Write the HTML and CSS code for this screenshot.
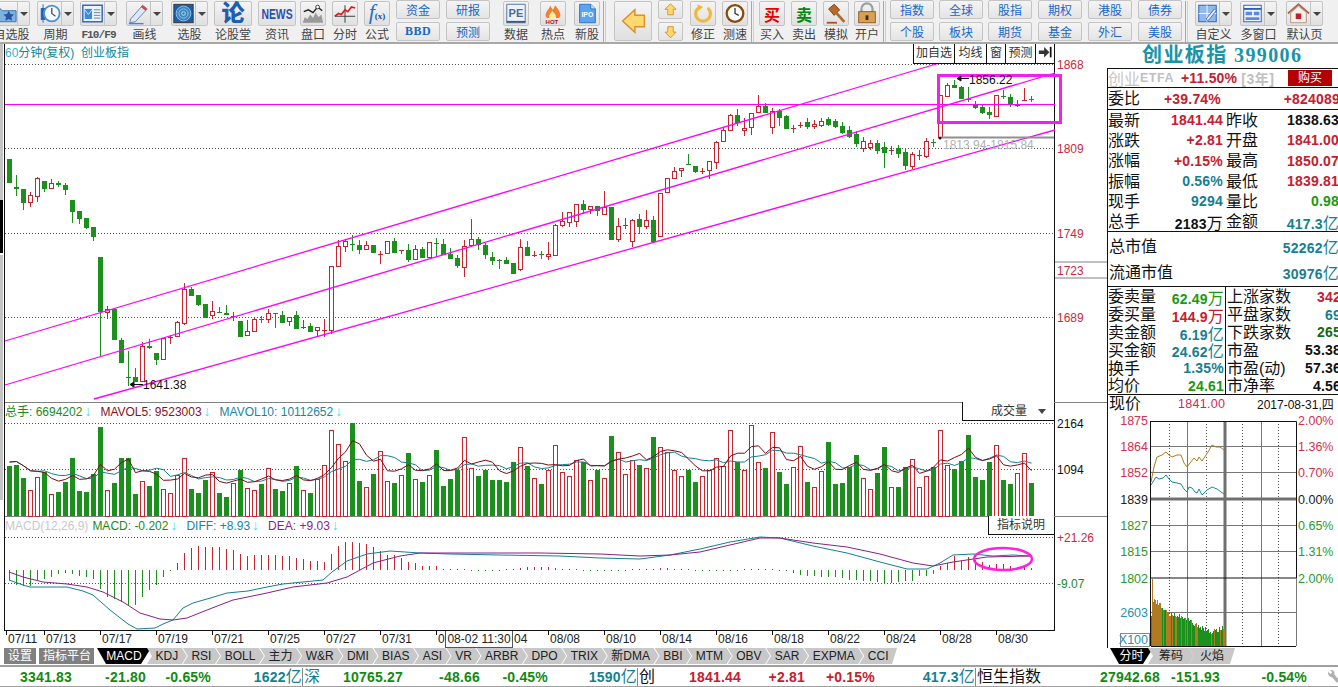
FILE: index.html
```html
<!DOCTYPE html>
<html lang="zh-CN">
<head>
<meta charset="utf-8">
<title>创业板指 399006</title>
<link rel="stylesheet" href="styles.css">
</head>
<body>
<header class="toolbar">
  <div class="tool split first"><div class="btn"><span class="ic"><svg viewBox="0 0 25 24"><path d="M-6 6h12l3 3h15v12H-6z" fill="#7fb2e0" stroke="#3a6ea8"/><path d="M16 9l1.800 3.600 4 .5-2.900 2.800.7 4-3.600-1.900-3.600 1.900.7-4-2.900-2.800 4-.5z" fill="#2a55a0"/></svg></span><span class="dd"></span></div><span class="lab">自选股</span></div>
  <div class="tool split ml7"><div class="btn"><span class="ic"><svg viewBox="0 0 25 24"><rect x="3" y="6" width="5" height="13" fill="#2a60c0"/><path d="M5.500 2v20" stroke="#2a60c0"/><circle cx="15" cy="12" r="8.500" fill="#f4f8ff" stroke="#4a90d8" stroke-width="2"/><path d="M15 6v6l4 3" fill="none" stroke="#555" stroke-width="1.500"/></svg></span><span class="dd"></span></div><span class="lab">周期</span></div>
  <div class="tool split ml6"><div class="btn"><span class="ic"><svg viewBox="0 0 25 24"><rect x="2" y="3" width="21" height="18" fill="#eef4ff" stroke="#2a5db0" stroke-width="1.500"/><rect x="4" y="7" width="8" height="11" fill="#3a8ae0"/><path d="M4 8l4 5 4-5" fill="none" stroke="#cfe6ff"/><path d="M14 8h7M14 11h7M14 14h7M14 17h7" stroke="#6a7a90"/></svg></span><span class="dd"></span></div><span class="lab mono">F10/F9</span></div>
  <div class="tool split ml9"><div class="btn"><span class="ic"><svg viewBox="0 0 25 24"><path d="M4 18L17 3l5 4L9 21l-6 1z" fill="#dfe8f4" stroke="#5a80b0"/><path d="M17 3l5 4-2 2-5-4z" fill="#d84a3a"/><path d="M2 23h16" stroke="#3a8ae0" stroke-width="1.500"/></svg></span><span class="dd"></span></div><span class="lab">画线</span></div>
  <div class="tool split ml8"><div class="btn"><span class="ic"><svg viewBox="0 0 25 24"><rect x="2" y="2" width="21" height="20" fill="#1f5ca8" stroke="#333"/><circle cx="12.500" cy="12" r="8" fill="#3d86c0" stroke="#8fc4e8"/><circle cx="12.500" cy="12" r="5" fill="none" stroke="#8fc4e8"/><circle cx="12.500" cy="12" r="2" fill="none" stroke="#bde0f4"/></svg></span><span class="dd"></span></div><span class="lab">选股</span></div>
  <div class="tool wide ml6"><div class="btn center"><span class="logo-lun">论</span></div><span class="lab">论股堂</span></div>
  <div class="tool wide ml6"><div class="btn center"><span class="logo-news">NEWS</span></div><span class="lab">资讯</span></div>
  <div class="tool ml4"><div class="btn"><svg viewBox="0 0 26 24"><path d="M2 22l2-6 3 2 3-5 3 4 3-6 3 5 3-3 2 9z" fill="#9a9a9a"/><path d="M3 10l5-2 5 3 5-6 5 4" fill="none" stroke="#222" stroke-width="1.500"/><circle cx="18" cy="5" r="2" fill="#fff" stroke="#333"/></svg></div><span class="lab">盘口</span></div>
  <div class="tool ml6"><div class="btn"><svg viewBox="0 0 26 24"><path d="M13 3v19M2 15h22" stroke="#333"/><path d="M2 15l4-3 3 1 4-5 3 2 4-5 4 1" fill="none" stroke="#e01818" stroke-width="1.800"/></svg></div><span class="lab">分时</span></div>
  <div class="tool ml6"><div class="btn center"><span class="logo-fx">f<small>(x)</small></span></div><span class="lab">公式</span></div>
  <div class="pair ml6"><span class="pb">资金</span><span class="pb bbd">BBD</span></div>
  <div class="pair ml6"><span class="pb">研报</span><span class="pb">预测</span></div>
  <div class="tool ml13"><div class="btn"><svg viewBox="0 0 26 24"><path d="M3 2h20v20H3z" fill="#eef3fa" stroke="#4a6fa0"/><path d="M3 20h20v2H3z" fill="#3a5a8a"/><text x="5" y="16" class="ti-pe">PE</text></svg></div><span class="lab">数据</span></div>
  <div class="tool ml11"><div class="btn"><svg viewBox="0 0 26 24"><path d="M5 14c0-5 4-6 5-11 1 3 2 3 3 5 1-2 2-3 2-5 3 3 6 7 6 11 0 2-1 3-2 3H7c-1 0-2-1-2-3z" fill="#f08030"/><path d="M9 17c-1-4 2-5 3-8 2 3 5 4 4 8z" fill="#fff0a0"/><text x="5" y="23" class="ti-hot">HOT</text></svg></div><span class="lab">热点</span></div>
  <div class="tool ml8"><div class="btn"><svg viewBox="0 0 26 24"><path d="M5 2h12l5 5v15H5z" fill="#5aa4f0" stroke="#2a70c0"/><path d="M17 2v5h5" fill="#cfe4fa" stroke="#2a70c0"/><text x="7" y="16" class="ti-ipo">IPO</text></svg></div><span class="lab">新股</span></div>
  <span class="sep"></span>
  <div class="btn bigbtn"><svg viewBox="0 0 38 40"><path d="M8 20l13-12v6h10v12H21v6z" fill="#ffd870" stroke="#d8902a" stroke-width="1.500"/></svg></div>
  <div class="pair narrow ml6"><span class="pb"><svg viewBox="0 0 25 18"><path d="M12.500 3l6 6h-3v6h-6V9h-3z" fill="#ffd870" stroke="#d8902a"/></svg></span><span class="pb"><svg viewBox="0 0 25 18"><path d="M12.500 16l-6-6h3V4h6v6h3z" fill="#ffd870" stroke="#d8902a"/></svg></span></div>
  <div class="tool ml7"><div class="btn"><svg viewBox="0 0 26 24"><path d="M8 6a8 8 0 1 0 10 0" fill="none" stroke="#f0b840" stroke-width="3.500"/><path d="M7 2l6 3-5 4z" fill="#f0b840"/></svg></div><span class="lab">修正</span></div>
  <div class="tool ml6"><div class="btn"><svg viewBox="0 0 26 24"><circle cx="13" cy="12" r="9" fill="#fff" stroke="#8a4a10" stroke-width="2.500"/><path d="M13 6v6l4 2" fill="none" stroke="#222" stroke-width="1.300"/></svg></div><span class="lab">测速</span></div>
  <span class="sep"></span>
  <div class="tool ml2"><div class="btn center"><span class="logo-buy">买</span></div><span class="lab">买入</span></div>
  <div class="tool ml6"><div class="btn center"><span class="logo-sell">卖</span></div><span class="lab">卖出</span></div>
  <div class="tool ml6"><div class="btn"><svg viewBox="0 0 26 24"><path d="M5 7l6-5 6 6-6 6z" fill="#b86a2a" stroke="#7a4010"/><path d="M13 11l9 10" stroke="#b06a30" stroke-width="3"/><path d="M3 22h11" stroke="#c04a20" stroke-width="2"/></svg></div><span class="lab">模拟</span></div>
  <div class="tool ml5"><div class="btn"><svg viewBox="0 0 26 24"><path d="M7 11V7a6 6 0 0 1 12 0v4" fill="none" stroke="#9aa0a0" stroke-width="2.500"/><rect x="4" y="10" width="18" height="12" fill="#d8a050" stroke="#8a5a20"/><rect x="11.500" y="14" width="3" height="5" fill="#3a2a10"/></svg></div><span class="lab">开户</span></div>
  <span class="sep"></span>
  <div class="pair ml1"><span class="pb">指数</span><span class="pb">个股</span></div>
  <div class="pair ml5"><span class="pb">全球</span><span class="pb">板块</span></div>
  <div class="pair ml5"><span class="pb">股指</span><span class="pb">期货</span></div>
  <div class="pair ml6"><span class="pb">期权</span><span class="pb">基金</span></div>
  <div class="pair ml6"><span class="pb">港股</span><span class="pb">外汇</span></div>
  <div class="pair ml6"><span class="pb">债券</span><span class="pb">美股</span></div>
  <span class="sep"></span>
  <div class="tool split ml4"><div class="btn"><span class="ic"><svg viewBox="0 0 25 24"><rect x="3" y="3" width="19" height="18" fill="#8fb8f0" stroke="#2a5db0"/><path d="M3 12h19M12 3v18" stroke="#fff"/><path d="M11 18L20 7l2 2-9 11z" fill="#e8eef8" stroke="#4a6fa0"/></svg></span><span class="dd"></span></div><span class="lab">自定义</span></div>
  <div class="tool split ml8"><div class="btn"><span class="ic"><svg viewBox="0 0 25 24"><rect x="3" y="3" width="19" height="18" fill="#eef4ff" stroke="#2a5db0"/><path d="M3 7h19" stroke="#2a5db0" stroke-width="2"/><path d="M5 10h7v4H5zM14 10h6v4h-6zM5 16h15v3H5z" fill="#5a8ad8"/></svg></span><span class="dd"></span></div><span class="lab">多窗口</span></div>
  <div class="tool split ml9"><div class="btn"><span class="ic"><svg viewBox="0 0 25 24"><path d="M1 12L12.500 2 24 12" fill="none" stroke="#a86a50" stroke-width="2"/><path d="M4 11v11h17V11l-8.500-7z" fill="#f4f0e8" stroke="#b09080"/><rect x="9.500" y="12" width="6" height="6" fill="#c02030"/></svg></span><span class="dd"></span></div><span class="lab">默认页</span></div>
</header>

<div class="main">
  <section class="chart">
    <div class="panes">
      <div class="pane pane-main">
        <div class="pane-head">
          <div class="title"><span class="t60">60</span>分钟(复权)&nbsp; 创业板指</div>
          <div class="toggles"><span class="tg">加自选</span><span class="tg">均线</span><span class="tg">窗</span><span class="tg">预测</span><span class="tg tg-arrow"><svg viewBox="0 0 16 14"><path d="M1 5h6V1l6 6-6 6V9H1z" fill="#333"/><path d="M14.500 1v12" stroke="#111" stroke-width="2"/></svg></span></div>
        </div>
      </div>
      <div class="pane pane-vol">
        <div class="pane-head">
          <div class="legend"><span class="lg c-g">总手: 6694202<b class="dn">↓</b></span><span class="lg c-dr">MAVOL5: 9523003<b class="dn">↓</b></span><span class="lg c-t">MAVOL10: 10112652<b class="dn">↓</b></span></div>
          <div class="selbox">成交量<i class="caret"></i></div>
        </div>
      </div>
      <div class="pane pane-macd">
        <div class="pane-head">
          <div class="legend"><span class="lg c-lg tight">MACD(12,26,9)</span><span class="lg c-g">MACD: -0.202<b class="dn">↓</b></span><span class="lg c-t">DIFF: +8.93<b class="dn">↓</b></span><span class="lg c-p">DEA: +9.03<b class="dn">↓</b></span></div>
          <div class="selbox help">指标说明</div>
        </div>
      </div>
    </div>
    <div class="timeaxis">
      <span class="tk tk-first">07/11</span><span class="tk">07/13</span><span class="tk">07/17</span><span class="tk">07/19</span><span class="tk">07/21</span><span class="tk">07/25</span><span class="tk">07/27</span><span class="tk">07/31</span><span class="tk">0</span><span class="tk tk-part">04</span><span class="tk">08/08</span><span class="tk">08/10</span><span class="tk">08/14</span><span class="tk">08/16</span><span class="tk">08/18</span><span class="tk">08/22</span><span class="tk">08/24</span><span class="tk">08/28</span><span class="tk">08/30</span>
      <span class="crosstime">08-02 11:30</span>
    </div>
    <nav class="tabs">
      <span class="setbtn">设置</span><span class="setbtn">指标平台</span>
      <span class="tab active">MACD</span><span class="tab">KDJ</span><span class="tab">RSI</span><span class="tab">BOLL</span><span class="tab">主力</span><span class="tab">W&amp;R</span><span class="tab">DMI</span><span class="tab">BIAS</span><span class="tab">ASI</span><span class="tab">VR</span><span class="tab">ARBR</span><span class="tab">DPO</span><span class="tab">TRIX</span><span class="tab">新DMA</span><span class="tab">BBI</span><span class="tab">MTM</span><span class="tab">OBV</span><span class="tab">SAR</span><span class="tab">EXPMA</span><span class="tab last">CCI</span>
    </nav>

    <svg class="canvas" viewBox="0 44 1107 604" width="1107" height="604">
      <g class="grid">
        <path d="M5 64.500H1054M5 148.500H1054M5 233.500H1054M5 317.500H1054M5 423.500H1054M5 469.500H1054M5 537.500H1054M5 583.500H1054"/>
      </g>
      <path class="divider" d="M5 402.500H1107M5 516.500H1107M1055 262H1107M1055 278H1107" />
      <g id="candles"></g>
      <g id="vols"></g>
      <g id="macds"></g>
      <polyline id="ma10" class="ln-teal" points=""/>
      <polyline id="ma5" class="ln-dred" points=""/>
      <polyline class="ln-teal" points="9,580 23,585 30,587 50,587 67,587 83,591 93,595 110,610 128,624 137,629 155,628 163,624 173,620 183,608 193,603 207,599 227,593 248,591 267,587 283,584 323,580 332,572 347,561 367,554 390,551 420,553 450,554 500,555 560,556 600,558 640,559 670,555 700,549 730,542 760,537 780,538 813,546 847,553 880,562 907,569 927,569 940,563 953,555 973,554 993,556 1013,555 1030,556"/>
      <polyline class="ln-purple" points="9,572 23,577 43,582 67,584 87,587 103,592 123,602 140,613 160,619 173,620 187,618 207,610 233,600 267,593 293,587 327,583 347,577 373,563 400,556 420,553 450,553 500,553 540,553 600,554 640,556 670,555 700,552 730,545 760,538 780,538 813,543 847,547 880,554 913,563 933,566 953,562 987,557 1030,556"/>
      <g class="magenta">
        <path class="mag-h" d="M5 104.500H1055"/>
        <path d="M5 341L943 62M5 385L1055 73M94 399L1055 130"/>
      </g>
      <rect class="mag-box" x="938.500" y="75.500" width="122" height="47"/>
      <ellipse class="mag-oval" cx="1003" cy="559" rx="29" ry="11"/>
      <path class="hl" d="M941 137.500H1054"/>
      <text x="943" y="149" class="lbl-gray">1813.94-1815.84</text>
      <path class="arrowline" d="M969 78.500H958M961 76l-4 2.500 4 2.500z"/>
      <text x="969" y="84" class="lbl-k">1856.22</text>
      <path class="arrowline" d="M143 384.500H131M134 382l-4 2.500 4 2.500z"/>
      <text x="143" y="389" class="lbl-k">1641.38</text>
      <circle cx="940" cy="138" r="1.500" fill="#111"/>
      <text x="1057" y="69" class="lbl-r">1868</text>
      <text x="1057" y="153" class="lbl-r">1809</text>
      <text x="1057" y="238" class="lbl-r">1749</text>
      <text x="1057" y="275" class="lbl-r">1723</text>
      <text x="1057" y="322" class="lbl-r">1689</text>
      <text x="1057" y="428" class="lbl-k">2164</text>
      <text x="1057" y="474" class="lbl-k">1094</text>
      <text x="1057" y="542" class="lbl-r">+21.26</text>
      <text x="1057" y="588" class="lbl-g">-9.07</text>
    </svg>
  </section>

  <aside class="side">
    <div class="panel">
      <div class="q-title">创业板指 399006</div>
      <div class="q-etf"><span class="gy16">创业</span><b class="gyb">ETFA</b><b class="red plus">+11.50%</b><span class="gyb thin">[3年]</span><span class="buy">购买</span></div>
      <div class="q-wei"><span class="cn">委比</span><b class="red w1">+39.74%</b><b class="red w2">+824089</b></div>
      <div class="q-grid">
        <div class="q-cell"><span class="cn">最新</span><b class="red">1841.44</b></div><div class="q-cell"><span class="cn">昨收</span><b class="blk">1838.63</b></div>
        <div class="q-cell"><span class="cn">涨跌</span><b class="red">+2.81</b></div><div class="q-cell"><span class="cn">开盘</span><b class="red">1841.00</b></div>
        <div class="q-cell"><span class="cn">涨幅</span><b class="red">+0.15%</b></div><div class="q-cell"><span class="cn">最高</span><b class="red">1850.07</b></div>
        <div class="q-cell"><span class="cn">振幅</span><b class="teal">0.56%</b></div><div class="q-cell"><span class="cn">最低</span><b class="red">1839.81</b></div>
        <div class="q-cell"><span class="cn">现手</span><b class="teal">9294</b></div><div class="q-cell"><span class="cn">量比</span><b class="green">0.98</b></div>
        <div class="q-cell"><span class="cn">总手</span><b class="blk">2183<em>万</em></b></div><div class="q-cell"><span class="cn">金额</span><b class="teal">417.3<em>亿</em></b></div>
      </div>
      <div class="q-cap">
        <div class="q-cap-row"><span class="cn">总市值</span><b class="teal">52262<em>亿</em></b></div>
        <div class="q-cap-row"><span class="cn">流通市值</span><b class="teal">30976<em>亿</em></b></div>
      </div>
      <div class="q-stat">
        <div class="q-cell"><span class="cn">委卖量</span><b class="green">62.49<em>万</em></b></div><div class="q-cell"><span class="cn">上涨家数</span><b class="red">342</b></div>
        <div class="q-cell"><span class="cn">委买量</span><b class="red">144.9<em>万</em></b></div><div class="q-cell"><span class="cn">平盘家数</span><b class="teal">69</b></div>
        <div class="q-cell"><span class="cn">卖金额</span><b class="teal">6.19<em>亿</em></b></div><div class="q-cell"><span class="cn">下跌家数</span><b class="dgreen">265</b></div>
        <div class="q-cell"><span class="cn">买金额</span><b class="teal">24.62<em>亿</em></b></div><div class="q-cell"><span class="cn">市盈</span><b class="blk">53.38</b></div>
        <div class="q-cell"><span class="cn">换手</span><b class="teal">1.35%</b></div><div class="q-cell"><span class="cn">市盈(动)</span><b class="blk">57.36</b></div>
        <div class="q-cell"><span class="cn">均价</span><b class="green">24.61</b></div><div class="q-cell"><span class="cn">市净率</span><b class="blk">4.56</b></div>
      </div>
      <div class="q-now"><span class="cn">现价</span><span class="nowp">1841.00</span><span class="nowd">2017-08-31,四</span></div>
      <svg class="mini" viewBox="1108 412 230 236" width="230" height="236">
        <g class="mini-dots"><path d="M1170.500 421V646M1207.500 421V646M1243.500 421V646M1279.500 421V646"/></g>
        <g class="mini-grid"><path d="M1152 446.500H1297M1152 472.500H1297M1152 525.500H1297M1152 551.500H1297M1152 612.500H1297M1188.500 421V646M1262.500 421V646M1297.500 578V646"/></g>
        <path class="mini-thick" d="M1152 499H1297M1226 421V646"/>
        <g id="minivol"></g>
        <polyline class="mini-brown" points="1152,482 1155,467 1158,457 1163,455 1167,452 1170,455 1173,457 1178,455 1182,455 1185,463 1188,467 1191,463 1195,458 1198,461 1200,457 1203,461 1205,458 1209,452 1213,445 1217,447 1221,447 1225,450"/>
        <polyline class="mini-teal" points="1152,485 1157,477 1160,479 1164,478 1167,475 1170,479 1173,482 1178,483 1182,484 1185,489 1188,492 1190,487 1193,488 1196,492 1198,493 1200,489 1203,495 1208,490 1213,487 1218,489 1222,492 1225,494"/>
        <path class="mini-black" d="M1152 421.500H1297.500V578M1152 578H1297M1151.500 421V646M1152 646.500H1297"/>
        <rect class="x100" x="1121.500" y="633.500" width="29" height="13"/>
        <text x="1149" y="425" class="m-r m-e">1875</text>
        <text x="1149" y="451" class="m-r m-e">1864</text>
        <text x="1149" y="477" class="m-r m-e">1852</text>
        <text x="1149" y="504" class="m-k m-e">1839</text>
        <text x="1149" y="530" class="m-g m-e">1827</text>
        <text x="1149" y="556" class="m-g m-e">1815</text>
        <text x="1149" y="583" class="m-g m-e">1802</text>
        <text x="1149" y="617" class="m-t m-e">2603</text>
        <text x="1149" y="644" class="m-t m-e">X100</text>
        <text x="1299" y="425" class="m-r">2.00%</text>
        <text x="1299" y="451" class="m-r">1.36%</text>
        <text x="1299" y="477" class="m-r">0.70%</text>
        <text x="1299" y="504" class="m-k">0.00%</text>
        <text x="1299" y="530" class="m-g">0.65%</text>
        <text x="1299" y="556" class="m-g">1.31%</text>
        <text x="1299" y="583" class="m-g">2.00%</text>
      </svg>
    </div>
    <nav class="side-tabs"><span class="tab active">分时</span><span class="tab">筹码</span><span class="tab last">火焰</span></nav>
  </aside>
</div>

<footer class="status">
  <span class="num g">3341.83</span><span class="num g">-21.80</span><span class="num g">-0.65%</span><span class="num t">1622<em>亿</em></span>
  <span class="nm">深</span><span class="num g">10765.27</span><span class="num g">-48.66</span><span class="num g">-0.45%</span><span class="num t">1590<em>亿</em></span>
  <span class="nm dk">创</span><span class="num r">1841.44</span><span class="num r">+2.81</span><span class="num r">+0.15%</span><span class="num t">417.3<em>亿</em></span>
  <span class="nm dk">恒生指数</span><span class="num g">27942.68</span><span class="num g">-151.93</span><span class="num g">-0.54%</span>
  <span class="wrench"><svg viewBox="0 0 12 14" width="12" height="14"><path d="M1 2l3 2 1-2-2-2c2-.5 4 .5 4.500 2.500 0 .8 0 1.300-.2 1.800L12 10l-2 3-5-5.800C3 7.500 .5 5 1 2z" fill="#b0b0b0"/></svg></span>
</footer>
<script src="chart.js"></script>
</body>
</html>
```
FILE: styles.css
```css
* { box-sizing: border-box; }
html, body { margin: 0; padding: 0; }
body {
  width: 1338px; height: 687px; overflow: hidden; background: #fff;
  font-family: "Liberation Sans", "Noto Sans CJK SC", sans-serif;
  font-size: 12px; color: #111;
}
em { font-style: normal; font-weight: 400; font-size: 16px; }
svg { display: block; }

/* toolbar */
.toolbar {
  display: flex; height: 44px; background: #f0f0f0;
  border-bottom: 2px solid #a8a8a8; overflow: hidden; padding-top: 1px;
}
.tool { display: flex; flex-direction: column; align-items: center; width: 26px; flex: none; }
.tool.split { width: 37px; }
.tool.wide { width: 38px; }
.tool.first { margin-left: -7px; }
.btn {
  width: 100%; height: 25px; display: flex; flex: none;
  border: 1px solid #c4c4c4; border-radius: 2px;
  background: linear-gradient(#f4f4f4, #e0e0e0);
}
.btn.center { align-items: center; justify-content: center; }
.btn svg { width: 100%; height: 100%; }
.ic { width: 24px; flex: none; border-right: 1px solid #c4c4c4; }
.dd { flex: 1; position: relative; }
.dd::after {
  content: ""; position: absolute; left: 2px; top: 10px;
  border: 4px solid transparent; border-top: 4px solid #444; border-bottom: 0;
}
.lab { margin-top: 2px; line-height: 15px; color: #444; white-space: nowrap; font-size: 12px; }
.lab.mono { font-family: "Liberation Mono", monospace; font-size: 11px; letter-spacing: -.9px; font-weight: 700; color: #555; }
.logo-lun { font-size: 23px; line-height: 23px; font-weight: 900; color: #1a5fb4; }
.logo-news { font-size: 14px; font-weight: 700; color: #2a50b0; transform: scaleX(.74); display: inline-block; }
.logo-fx { font-family: "Liberation Serif", serif; font-style: italic; font-size: 22px; line-height: 22px; color: #2070c8; }
.logo-fx small { font-size: 9px; color: #2050a0; font-style: normal; font-weight: 700; }
.logo-buy { font-size: 16px; font-weight: 700; color: #e80000; }
.logo-sell { font-size: 16px; font-weight: 700; color: #008a10; }
.ti-pe { font: 700 12px "Liberation Sans", sans-serif; fill: #4a6a9a; }
.ti-hot { font: 700 6.500px "Liberation Sans", sans-serif; fill: #b01010; }
.ti-ipo { font: 700 7.500px "Liberation Sans", sans-serif; fill: #fff; }
.pair { display: flex; flex-direction: column; width: 44px; flex: none; gap: 3px; margin-top: -1px; }
.pair.narrow { width: 25px; }
.pb {
  height: 19px; display: flex; align-items: center; justify-content: center;
  border: 1px solid #c4c4c4; border-radius: 2px; background: linear-gradient(#f4f4f4, #e4e4e4);
  color: #1668c8; font-size: 12px;
}
.pb.bbd { font-family: "Liberation Serif", serif; font-weight: 700; letter-spacing: .5px; }
.bigbtn { width: 38px; height: 40px; flex: none; margin-left: 5px; }
.sep {
  width: 3px; height: 42px; margin: 0 3px 0 3px; flex: none;
  border-left: 1px solid #a8a8a8; border-right: 1px solid #d0d0d0; background: #f0f0f0;
}
.ml1 { margin-left: 1px; } .ml2 { margin-left: 2px; }
.ml4 { margin-left: 4px; } .ml5 { margin-left: 5px; } .ml6 { margin-left: 6px; } .ml7 { margin-left: 7px; }
.ml8 { margin-left: 8px; } .ml9 { margin-left: 9px; } .ml11 { margin-left: 11px; } .ml13 { margin-left: 13px; }

/* main */
.main { display: flex; height: 620px; }
.chart { width: 1107px; flex: none; position: relative; }
.canvas { position: absolute; left: 0; top: 0; pointer-events: none; }
.canvas text { font-family: "Liberation Sans", sans-serif; font-size: 12px; }
.chart::before {
  content: ""; position: absolute; left: 0; top: 0; width: 3px; height: 456px;
  background: linear-gradient(#c4c4c4 0 156px, #000 156px 209px, #fff 209px 211px, #c4c4c4 211px);
}
.panes { margin-left: 4px; width: 1051px; height: 587px; border: solid #111; border-width: 0 1px 1px 1px; }
.pane { position: relative; }
.pane-main { height: 358px; }
.pane-vol { height: 114px; }
.pane-macd { height: 114px; }
.pane-head { position: relative; z-index: 1; display: flex; justify-content: space-between; align-items: flex-start; }
.title { color: #10889a; font-size: 12px; line-height: 19px; white-space: nowrap; }
.t60 { color: #3ab0c8; }
.toggles { display: flex; height: 20px; background: #fff; border-bottom: 1px solid #111; }
.tg { border-left: 1px solid #111; height: 19px; line-height: 19px; padding: 0 2px; font-size: 12px; color: #333; text-align: center; }
.tg:nth-child(1) { width: 41px; } .tg:nth-child(2) { width: 32px; } .tg:nth-child(3) { width: 19px; } .tg:nth-child(4) { width: 30px; }
.tg-arrow { width: 19px; padding: 2px; }
.legend { display: flex; line-height: 18px; padding-top: 1px; white-space: nowrap; }
.lg { margin-right: 9px; }
.lg.tight { margin-right: 4px; }
.dn { color: #40e0f8; font-weight: 700; font-size: 14px; margin-left: 2px; line-height: 14px; }
.c-g { color: #1a8a1a; } .c-dr { color: #8a1020; } .c-t { color: #1a85a0; } .c-p { color: #8a2090; } .c-lg { color: #c8c8cc; }
.selbox {
  width: 92px; height: 19px; border: solid #111; border-width: 0 0 1px 1px; background: #fff;
  position: relative; padding-left: 28px; line-height: 18px; color: #333; flex: none;
}
.selbox.help { width: 66px; padding-left: 8px; }
.caret { position: absolute; right: 8px; top: 7px; border: 4px solid transparent; border-top: 5px solid #444; border-bottom: 0; }

.timeaxis { display: flex; height: 17px; padding-left: 6px; position: relative; }
.tk { width: 56px; flex: none; border-left: 1px solid #111; height: 4px; padding-left: 1px; line-height: 14px; padding-top: 1px; color: #222; white-space: nowrap; }
.tk-first { width: 38px; }
.tk-part { padding-left: 21px; }
.crosstime {
  position: absolute; left: 445px; top: 0; width: 68px; height: 17px; line-height: 16px; text-align: center;
  border: 1px solid #555; border-top: 0; background: #fff; color: #222;
}

.tabs { display: flex; height: 16px; padding-left: 4px; }
.setbtn { background: #808080; color: #fff; height: 16px; line-height: 16px; padding: 0 4px; margin-right: 3px; }
.setbtn:nth-child(2) { width: 55px; white-space: nowrap; }
.setbtn:nth-child(1) { width: 32px; }
.tab {
  height: 16px; line-height: 16px; padding: 0 8.600px; margin-left: -4px; background: #c8c8c8; color: #222; white-space: nowrap;
  clip-path: polygon(0 0, calc(100% - 5px) 0, 100% 50%, calc(100% - 5px) 100%, 0 100%, 5px 50%);
}
.tab.active { background: #000; color: #fff; width: 54px; padding: 0 9px; margin-left: 0; text-align: center; clip-path: polygon(0 0, 100% 0, calc(100% - 10px) 100%, 9px 100%); }
.tab.last { clip-path: polygon(0 0, 100% 0, calc(100% - 5px) 100%, 0 100%, 5px 50%); }

/* chart drawing */
.grid path { stroke: #555; stroke-dasharray: 1 2; fill: none; }
.divider { stroke: #808080; fill: none; }
.magenta path { stroke: #ff00ff; stroke-width: 1.300; fill: none; }
.magenta .mag-h { stroke-width: 1; }
.mag-box { fill: none; stroke: #f020f0; stroke-width: 3; }
.mag-oval { fill: none; stroke: #ff20e0; stroke-width: 2.500; }
.ln-teal { fill: none; stroke: #148090; }
.ln-dred { fill: none; stroke: #800810; }
.ln-purple { fill: none; stroke: #882088; }
.hl { stroke: #909090; stroke-width: 2; }
.arrowline { stroke: #111; fill: #111; }
.canvas .lbl-k { fill: #111; }
.canvas .lbl-r { fill: #c82a40; }
.canvas .lbl-g { fill: #1a8a1a; }
.canvas .lbl-gray { fill: #b0b0b0; }

/* side */
.side { width: 231px; flex: none; }
.panel { height: 604px; overflow: hidden; width: 231px; padding-left: 1px; background: linear-gradient(#111, #111) 0 24px / 1px 100% no-repeat; }
.red { color: #c4202e; } .blk { color: #111; } .teal { color: #157f90; } .green { color: #1a9a10; } .dgreen { color: #156a15; }
.cn { font-size: 16px; color: #111; white-space: nowrap; line-height: 17px; }
.panel b { font-size: 14px; letter-spacing: .2px; white-space: nowrap; }
.q-title {
  height: 24px; padding-left: 34px; line-height: 23px; white-space: nowrap;
  font-family: "Liberation Serif", "Noto Sans CJK SC", serif; font-size: 20px; font-weight: 700; letter-spacing: 1.400px; color: #1a94a8;
}
.q-etf { height: 19px; border-top: 1px solid #111; display: flex; align-items: center; position: relative; padding-left: 1px; white-space: nowrap; margin-left: -1px; }
.gy16 { font-size: 16px; color: #c8c8c8; }
.panel .gyb { color: #c0c0c0; font-size: 12.500px; letter-spacing: .5px; }
.panel .gyb.thin { font-weight: 700; margin-left: 4px; font-size: 14px; }
.panel .plus { margin-left: 7px; }
.buy { position: absolute; left: 181px; top: 1px; width: 44px; height: 16px; line-height: 16px; background: #b30000; color: #fff; text-align: center; font-size: 12px; }
.q-wei { height: 22px; border-top: 1px solid #111; display: flex; align-items: center; padding-left: 1px; position: relative; width: 240px; margin-left: -1px; }
.panel .w1 { position: absolute; right: 126px; }
.panel .w2 { position: absolute; right: 7px; }
.q-grid {
  border-top: 1px solid #111; height: 122px; width: 236px; padding-left: 1px; margin-left: -1px;
  display: grid; grid-template-columns: 115px 113px; column-gap: 3px; grid-auto-rows: 20.300px; align-items: center;
}
.q-cell { display: flex; justify-content: space-between; align-items: center; white-space: nowrap; }
.q-cap { height: 55px; border-top: 1px solid #111; width: 236px; padding: 1px 0 0 2px; margin-left: -1px; }
.q-cap-row { display: flex; justify-content: space-between; align-items: center; height: 26px; padding-right: 4px; }
.q-stat {
  border-top: 1px solid #111; height: 108px; width: 236px; padding-left: 1px; padding-top: 1px; margin-left: -1px;
  display: grid; grid-template-columns: 116px 114px; grid-auto-rows: 17.800px; align-items: center; column-gap: 3px;
  background: linear-gradient(#111, #111) 118px 0 / 1px 100% no-repeat;
}
.q-now { height: 18px; border-top: 1px solid #111; display: flex; position: relative; padding-left: 2px; align-items: center; white-space: nowrap; margin-left: -1px; }
.nowp { position: absolute; left: 71px; color: #c82a60; font-size: 12.500px; letter-spacing: .3px; }
.nowd { position: absolute; left: 150px; color: #111; font-size: 12px; }
.mini { margin-left: -1px; }
.mini .m-e { text-anchor: end; }
.mini text { font-family: "Liberation Sans", sans-serif; font-size: 12.500px; }
.m-r { fill: #d03050; } .m-k { fill: #222; } .m-g { fill: #2a9a2a; } .m-t { fill: #2a90b0; }
.mini-dots path { stroke: #555; stroke-dasharray: 1 2; fill: none; }
.mini-grid path { stroke: #777; fill: none; }
.mini-thick { stroke: #707070; stroke-width: 3; fill: none; }
.mini-black { stroke: #111; fill: none; }
.mini-brown { fill: none; stroke: #b07a20; }
.mini-teal { fill: none; stroke: #188a98; }
.x100 { fill: #fff; stroke: #888; }
.side-tabs { display: flex; padding-left: 3px; height: 16px; }
.side-tabs .tab { padding: 0 11px; margin-left: -5px; width: auto; }
.side-tabs .tab.active { width: 43px; margin-left: 0; padding: 0; }

/* status */
.status {
  position: relative; height: 22px; margin-top: 1px;
  border-top: 2px solid #a0a0a0; border-bottom: 1px solid #a0a0a0;
  display: grid; align-items: center; white-space: nowrap;
  grid-template-columns: 72px 74px 65px 91px 18px 83px 77px 68px 89px 17px 87px 64px 70px 100px 65px 120px 60px 87px 1fr;
}
.status em { font-size: 16px; line-height: 16px; }
.num { text-align: right; font-weight: 700; font-size: 14px; letter-spacing: .2px; line-height: 18px; }
.num.g { color: #128a12; } .num.r { color: #c4202e; } .num.t { color: #157f90; }
.nm { font-size: 16px; line-height: 18px; border-left: 1px solid #888; padding-left: 1px; color: #157f90; }
.nm.dk { color: #111; }
.wrench { padding-left: 20px; }
```
FILE: chart.js
```js
(function () {
var NS = 'http://www.w3.org/2000/svg';
// colour (1 red, 0 green), body top, body bottom, high, low
var C = [
[0,159,182,159,182],[0,187,188,175,196],[0,189,202,189,210],[1,195,202,192,207],[1,178,196,177,202],[0,181,188,181,192],[1,183,188,179,188],[0,183,184,181,187],[0,185,189,183,195],[0,200,211,200,223],
[0,211,218,211,224],[0,218,227,218,229],[0,227,236,227,241],[0,257,311,257,357],[1,309,312,306,319],[0,309,339,309,339],[0,340,362,338,362],[0,377,377,351,386],[0,377,381,368,382],[1,346,381,342,382],
[0,346,347,339,349],[0,353,359,353,365],[1,338,359,338,359],[1,337,337,335,344],[1,322,336,321,336],[1,289,323,283,325],[0,289,295,287,296],[0,295,304,295,306],[0,304,317,304,317],[1,311,315,301,319],
[0,312,312,307,313],[0,313,314,305,315],[1,316,316,312,321],[0,321,336,321,336],[1,331,335,320,335],[1,319,331,318,331],[0,319,319,316,323],[1,313,319,309,323],[0,313,313,313,328],[0,315,322,311,322],
[1,317,321,317,326],[0,315,328,311,328],[1,327,327,320,329],[0,326,331,323,331],[1,327,330,327,337],[1,330,330,319,337],[1,266,330,266,334],[1,246,266,240,266],[1,241,246,239,252],[0,244,244,235,251],
[0,245,249,240,254],[1,245,249,241,249],[0,245,252,245,253],[1,254,254,251,264],[1,241,253,241,253],[0,241,252,238,252],[1,250,250,250,254],[0,250,259,244,262],[1,249,259,245,260],[0,249,257,247,258],
[1,242,257,242,257],[0,243,243,238,257],[0,244,254,239,254],[0,254,258,248,259],[0,258,265,255,268],[1,246,267,240,277],[1,239,245,219,245],[0,239,244,237,250],[0,245,254,243,259],[0,257,260,252,265],
[0,260,260,259,269],[0,260,263,257,264],[0,263,273,263,274],[1,247,269,239,271],[0,247,255,241,255],[1,255,255,251,257],[0,254,254,251,259],[1,254,256,242,260],[1,225,255,224,256],[1,221,225,212,227],
[1,212,222,212,227],[1,204,221,204,227],[0,204,209,200,214],[1,206,209,206,214],[0,206,210,206,216],[1,207,214,191,214],[0,207,239,207,239],[1,226,239,218,242],[1,225,225,218,229],[1,220,241,219,247],
[0,219,226,214,234],[1,220,226,210,229],[0,220,241,216,243],[1,193,236,193,236],[1,178,192,178,192],[1,171,178,167,179],[1,168,170,168,177],[0,164,164,154,165],[0,166,171,166,173],[1,171,171,168,174],
[1,161,170,161,179],[1,142,162,141,169],[1,130,141,127,142],[1,115,130,114,131],[0,115,122,109,126],[1,128,130,118,136],[1,113,127,113,135],[1,106,112,95,113],[0,106,112,103,112],[1,111,127,108,134],
[0,111,117,109,126],[0,116,128,115,128],[1,128,128,125,133],[1,125,125,122,128],[0,122,126,118,129],[1,124,126,120,129],[1,121,125,118,127],[0,119,124,117,126],[0,121,126,119,128],[0,126,132,122,134],
[0,130,136,126,138],[0,134,143,131,147],[1,141,148,137,152],[1,143,147,140,150],[0,143,150,140,154],[0,147,152,142,168],[1,150,150,146,155],[0,148,153,145,158],[0,152,165,148,170],[1,154,166,152,169],
[1,155,155,150,160],[1,141,156,138,158],[0,142,142,139,147],[1,95,137,95,137],[1,85,96,83,97],[0,85,87,80,87],[0,87,98,86,99],[0,99,99,87,102],[0,104,107,101,109],[0,107,112,105,114],
[0,112,114,107,119],[1,95,116,95,116],[0,96,96,90,99],[0,97,104,94,107],[1,105,105,100,107],[1,100,100,88,100],[0,99,99,96,102]
];
var RED = '#c62530', GRN = '#1c901c';
var VZ = [198,195,235,270,232,216,282,276,245,174,273,276,222,81,270,249,174,174,282,243,258,214,267,280,226,175,267,279,240,217,279,291,250,210,264,270,252,205,267,273,250,198,270,279,238,195,91,132,183,69,243,261,222,153,243,249,226,159,238,246,225,150,258,237];
var VY = [470,437,468,476,470,480,480,482,462,447,466,478,484,470,445,472,476,460,462,480,470,478,436,452,474,460,465,468,437,447,452,470,476,470,482,476,470,458,466,430,462,470,425,462,468,432];
var VZ2 = [216,252,202,138,246,261,214,126,252,249,201,165,234,267,218,141,261,261,201,177,261,228,201,91,195,207,183,105,231,240,186,135,240,252,220,159,249];
var VT = VZ.map(function (z) { return 400 + z / 3; }).concat(VY, VZ2.map(function (z) { return 400 + z / 3; }));
var MZ = [540,555,558,558,540,537,531,522,520,523,528,531,538,567,590,597,605,615,615,592,570,555,530,513,489,459,443,438,441,441,441,447,450,462,468,465,465,465,465,468,468,474,477,483,483,486,462,438,426,425,429,432,441,453,465,465,474,486,489,498,498,498,506,508,
506,508,512,514,514,512,510,508,506,504,502,500,500,502,504,506,506,508,510,512,512,514,514,512,510,508,508,506,506,504,504,506,506,508,510,512,514,514,512,512,510,508,508,506,506,508,510,
512,520,525,527,529,530,530,532,534,540,541,543,543,546,549,549,546,543,543,528,527,522,497,488,467,484,470,480,487,495,492,492,497,500,502,505];

function el(name, attrs, parent) {
  var e = document.createElementNS(NS, name);
  for (var k in attrs) e.setAttribute(k, attrs[k]);
  parent.appendChild(e);
  return e;
}
var gc = document.getElementById('candles');
var gv = document.getElementById('vols');
var gm = document.getElementById('macds');
[gc, gv, gm].forEach(function (g) { g.setAttribute('shape-rendering', 'crispEdges'); });

C.forEach(function (c, i) {
  var x = 9 + 7 * i, col = c[0] ? RED : GRN;
  el('rect', { x: x, y: c[3], width: 1, height: Math.max(c[4] - c[3], 1), fill: col }, gc);
  if (c[1] === c[2]) {
    el('rect', { x: x - 2, y: c[1], width: 5, height: 1, fill: col }, gc);
  } else if (c[0]) {
    el('rect', { x: x - 1.5, y: c[1] + 0.5, width: 4, height: c[2] - c[1], fill: '#fff', stroke: col }, gc);
  } else {
    el('rect', { x: x - 2, y: c[1], width: 5, height: c[2] - c[1] + 1, fill: col }, gc);
  }
  var t = Math.round(VT[i]);
  if (c[0]) el('rect', { x: x - 1.5, y: t + 0.5, width: 4, height: 516 - t, fill: '#fff', stroke: RED }, gv);
  else el('rect', { x: x - 2, y: t, width: 5, height: 516 - t, fill: GRN }, gv);
  var m = 400 + MZ[i] / 3, zero = 570;
  var up = m < zero;
  el('rect', { x: x, y: Math.round(Math.min(m, zero)), width: 1, height: Math.max(Math.round(Math.abs(m - zero)), 1), fill: up ? RED : GRN }, gm);
});

function ma(n) {
  var out = [];
  for (var i = 0; i < VT.length; i++) {
    var s = 0, k = 0;
    for (var j = Math.max(0, i - n + 1); j <= i; j++) { s += 516 - VT[j]; k++; }
    out.push((9.5 + 7 * i) + ',' + (516 - s / k - 4).toFixed(1));
  }
  return out.join(' ');
}
document.getElementById('ma5').setAttribute('points', ma(5));
document.getElementById('ma10').setAttribute('points', ma(10));

var gmv = document.getElementById('minivol');
gmv.setAttribute('shape-rendering', 'crispEdges');
el('rect', { x: 1152, y: 616, width: 1, height: 30, fill: '#1a85a0' }, gmv);
el('rect', { x: 1153, y: 579, width: 1, height: 67, fill: '#b07a20' }, gmv);
var keys = [[1154, 600], [1160, 603], [1168, 613], [1184, 617], [1200, 627], [1213, 632], [1226, 627]];
var seed = 7;
for (var x = 1154; x < 1226; x++) {
  var a = keys[0], b = keys[1];
  for (var q = 0; q < keys.length - 1; q++) if (x >= keys[q][0] && x < keys[q + 1][0]) { a = keys[q]; b = keys[q + 1]; }
  seed = (seed * 31 + 11) % 97;
  var yt = Math.round(a[1] + (b[1] - a[1]) * (x - a[0]) / (b[0] - a[0]) + (seed % 5) - 2);
  var brown = (x < 1172 && seed % 3 !== 0) || seed % 4 === 0;
  el('rect', { x: x, y: yt, width: 1, height: 646 - yt, fill: brown ? '#b07a20' : '#1c901c' }, gmv);
}
})();
```
